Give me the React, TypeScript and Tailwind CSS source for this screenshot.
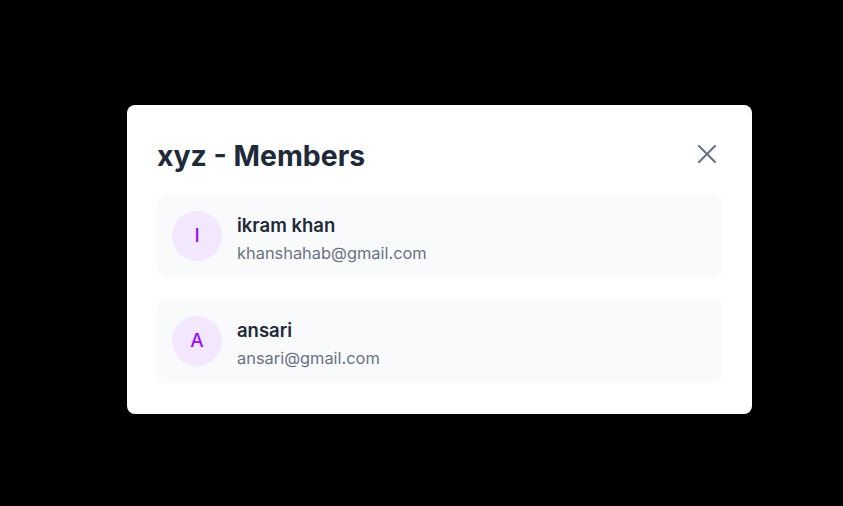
import React from 'react';

type Member = { name: string; email: string };

const members: Member[] = [
  { name: 'ikram khan', email: 'khanshahab@gmail.com' },
  { name: 'ansari', email: 'ansari@gmail.com' },
];

const CloseIcon: React.FC = () => (
  <svg width="22" height="22" viewBox="0 0 22 22" fill="none" stroke="currentColor" strokeWidth="2.2" strokeLinecap="round">
    <path d="M3 3 19 19" />
    <path d="M19 3 3 19" />
  </svg>
);

const MemberCard: React.FC<{ member: Member }> = ({ member }) => (
  <div className="flex h-[84px] items-center gap-[15px] rounded-lg bg-gray-50 px-[15px]">
    <div className="flex h-[50px] w-[50px] shrink-0 items-center justify-center rounded-full bg-purple-100 text-[19px] font-medium text-purple-600">
      {member.name.charAt(0).toUpperCase()}
    </div>
    <div className="flex flex-col pt-[6px]">
      <span className="text-[18.5px] font-semibold leading-7 text-gray-800">{member.name}</span>
      <span className="text-[16.4px] leading-7 text-gray-500">{member.email}</span>
    </div>
  </div>
);

export default function App() {
  return (
    <div
      className="min-h-[506px] bg-black pl-[127px] pt-[105px]"
      style={{ fontFamily: 'Inter, "Open Sans", sans-serif' }}
    >
      <div className="w-[625px] rounded-lg bg-white px-[30px] pt-[30px] pb-[31px]">
        <div className="mb-[17px] flex items-center justify-between">
          <h2 className="text-[28.4px] font-bold leading-[42px] text-gray-800">xyz - Members</h2>
          <button className="mr-[4px] mb-[5px] text-gray-500">
            <CloseIcon />
          </button>
        </div>
        <div className="flex flex-col gap-[21px]">
          {members.map((m) => (
            <MemberCard key={m.email} member={m} />
          ))}
        </div>
      </div>
    </div>
  );
}
